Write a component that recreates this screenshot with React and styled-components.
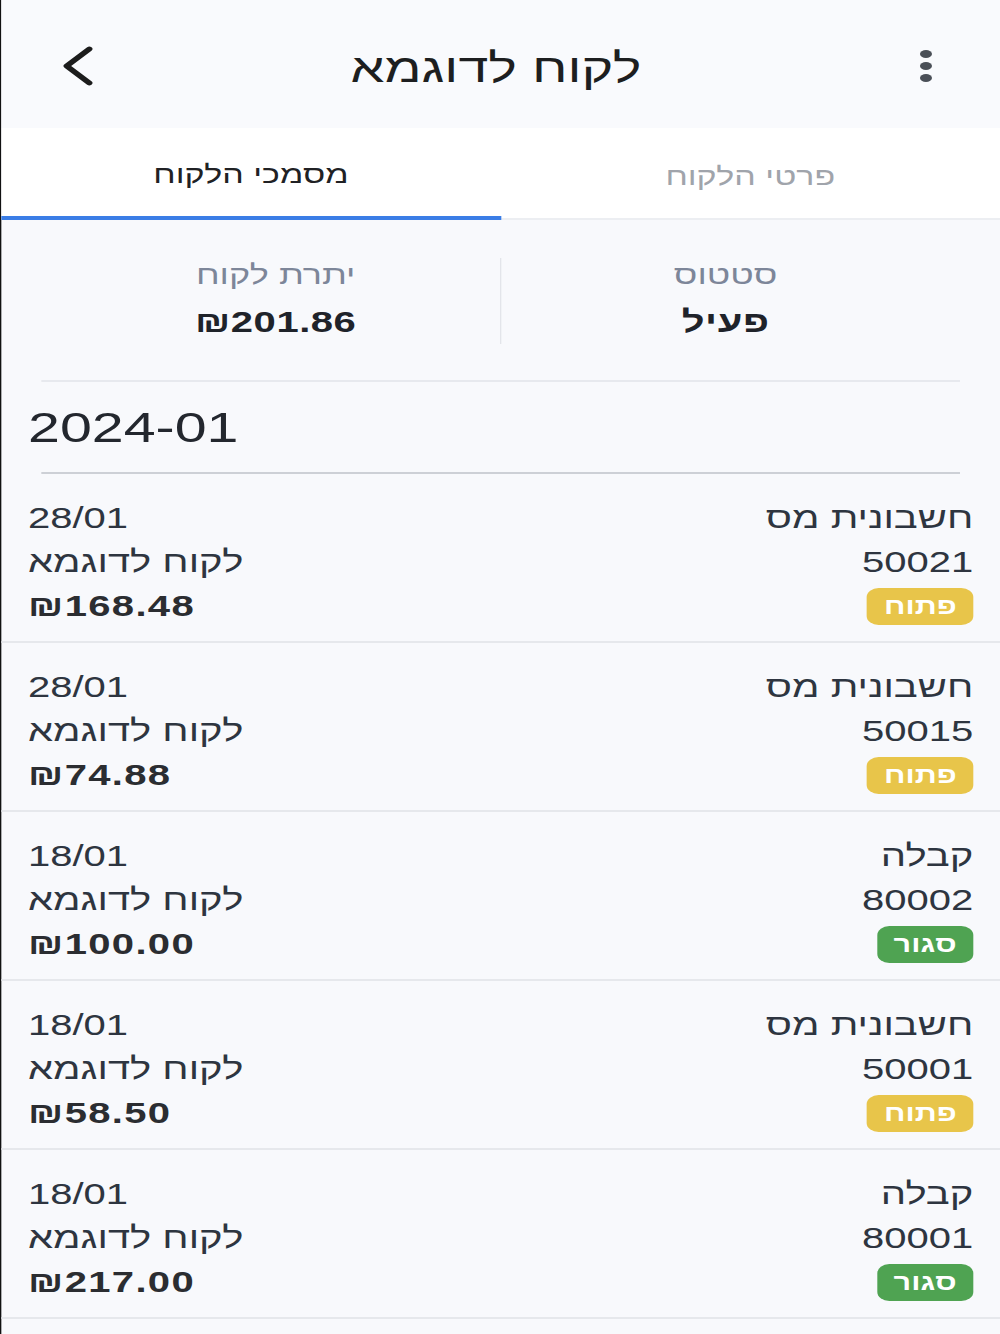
import { styled, createGlobalStyle } from "styled-components";

// the phone screen is 750 wide, stretched to the 1000px window

const GlobalStyle = createGlobalStyle`
  html, body {
    margin: 0;
    padding: 0;
    background: #f8f9fc;
    overflow: hidden;
  }
  body {
    font-family: "Liberation Sans", Arial, sans-serif;
  }
`;

const Stage = styled.div`
  width: 750px;
  min-height: 1334px;
  transform: scaleX(1.3333);
  transform-origin: 0 0;
  background: #f8f9fc;
  border-left: 1.5px solid #111;
  box-sizing: border-box;
  color: #2e3540;
`;

const Header = styled.header`
  height: 128px;
  display: grid;
  grid-template-columns: 1fr auto 1fr;
  align-items: center;
  padding: 0 51px 0 44px;
  background: #f9fafd;
`;

const Title = styled.h1`
  margin: 0;
  padding-top: 8px;
  font-size: 40.5px;
  font-weight: 400;
  color: #1d1e20;
  line-height: 120px;
`;

const IconButton = styled.button`
  border: none;
  background: none;
  padding: 0;
  display: flex;
  align-items: center;
  justify-self: ${(p) => (p.$end ? "end" : "start")};
  margin-top: 4px;
  cursor: pointer;
`;

const Dots = styled.span`
  display: flex;
  flex-direction: column;
  gap: 4px;
  & i {
    width: 9px;
    height: 8px;
    border-radius: 50%;
    background: #4a4f57;
  }
`;

const Tabs = styled.nav`
  display: flex;
  background: #fff;
`;

const Tab = styled.div`
  flex: 1;
  height: 92px;
  box-sizing: border-box;
  display: flex;
  align-items: center;
  justify-content: center;
  font-size: 25.5px;
  color: ${(p) => (p.$active ? "#202124" : "#a0a4ab")};
  border-bottom: ${(p) => (p.$active ? "4px solid #3a7de6" : "2px solid #eceef2")};
  padding-top: ${(p) => (p.$active ? "5px" : "7px")};
`;

const Summary = styled.section`
  display: flex;
  padding: 38px 37.5px 36px;
`;

const SummaryCol = styled.div`
  flex: 1;
  display: flex;
  flex-direction: column;
  align-items: center;
  gap: 8px;
  & + & {
    border-right: 1px solid #e3e5ea;
  }
`;

const Label = styled.span`
  font-size: 27px;
  line-height: 34px;
  color: #7d8699;
`;

const Value = styled.span`
  font-size: 30px;
  line-height: 44px;
  font-weight: 700;
  color: #1f232a;
  letter-spacing: 0.4px;
`;

const Rule = styled.hr`
  margin: 0 30px 0 30px;
  border: none;
  height: 2px;
  background: ${(p) => (p.$strong ? "#cdd0d6" : "#e7e9ee")};
`;

const Month = styled.h2`
  margin: 0;
  padding: 0 20px;
  font-size: 43px;
  font-weight: 400;
  line-height: 90px;
  text-align: left;
  color: #23272e;
`;

const Row = styled.div`
  display: flex;
  justify-content: space-between;
  padding: 22px 20px 13px 20px;
  border-bottom: 2px solid #e6e8ec;
`;

const Col = styled.div`
  display: flex;
  flex-direction: column;
  align-items: ${(p) => (p.$left ? "flex-end" : "flex-start")};
`;

const Line = styled.span`
  font-size: 30px;
  line-height: 44px;
  height: 44px;
  display: flex;
  align-items: center;
  font-weight: ${(p) => (p.$bold ? 700 : 400)};
  color: ${(p) => (p.$bold ? "#2b2d31" : "#2e3540")};
  letter-spacing: ${(p) => (p.$bold ? "1px" : "0")};
`;

const Badge = styled.span`
  height: 37px;
  padding: 0 12.5px;
  border-radius: 9px;
  display: inline-flex;
  align-items: center;
  font-size: 23px;
  font-weight: 700;
  color: #fff;
  background: ${(p) => (p.$closed ? "#4fa352" : "#e8c54a")};
`;

const docs = [
  { type: "חשבונית מס", num: "50021", open: true, date: "28/01", amount: "168.48" },
  { type: "חשבונית מס", num: "50015", open: true, date: "28/01", amount: "74.88" },
  { type: "קבלה", num: "80002", open: false, date: "18/01", amount: "100.00" },
  { type: "חשבונית מס", num: "50001", open: true, date: "18/01", amount: "58.50" },
  { type: "קבלה", num: "80001", open: false, date: "18/01", amount: "217.00" },
];

const App = () => {
  return (
    <>
      <GlobalStyle />
      <Stage dir="rtl">
        <Header>
          <IconButton aria-label="more">
            <Dots>
              <i />
              <i />
              <i />
            </Dots>
          </IconButton>
          <Title>לקוח לדוגמא</Title>
          <IconButton $end aria-label="back">
            <svg width="28" height="42" viewBox="0 0 28 42">
              <polyline
                points="22,4 5,21 22,38"
                fill="none"
                stroke="#1c1c1c"
                strokeWidth="4.6"
                strokeLinecap="round"
                strokeLinejoin="round"
              />
            </svg>
          </IconButton>
        </Header>

        <Tabs>
          <Tab>פרטי הלקוח</Tab>
          <Tab $active>מסמכי הלקוח</Tab>
        </Tabs>

        <Summary>
          <SummaryCol>
            <Label>סטטוס</Label>
            <Value>פעיל</Value>
          </SummaryCol>
          <SummaryCol>
            <Label>יתרת לקוח</Label>
            <Value dir="ltr">₪201.86</Value>
          </SummaryCol>
        </Summary>

        <Rule />
        <Month dir="ltr">2024-01</Month>
        <Rule $strong />

        {docs.map((d) => (
          <Row key={d.num}>
            <Col>
              <Line>{d.type}</Line>
              <Line>{d.num}</Line>
              <Line>
                <Badge $closed={!d.open}>{d.open ? "פתוח" : "סגור"}</Badge>
              </Line>
            </Col>
            <Col $left>
              <Line dir="ltr">{d.date}</Line>
              <Line>לקוח לדוגמא</Line>
              <Line $bold dir="ltr">₪{d.amount}</Line>
            </Col>
          </Row>
        ))}
      </Stage>
    </>
  );
};

export default App;
